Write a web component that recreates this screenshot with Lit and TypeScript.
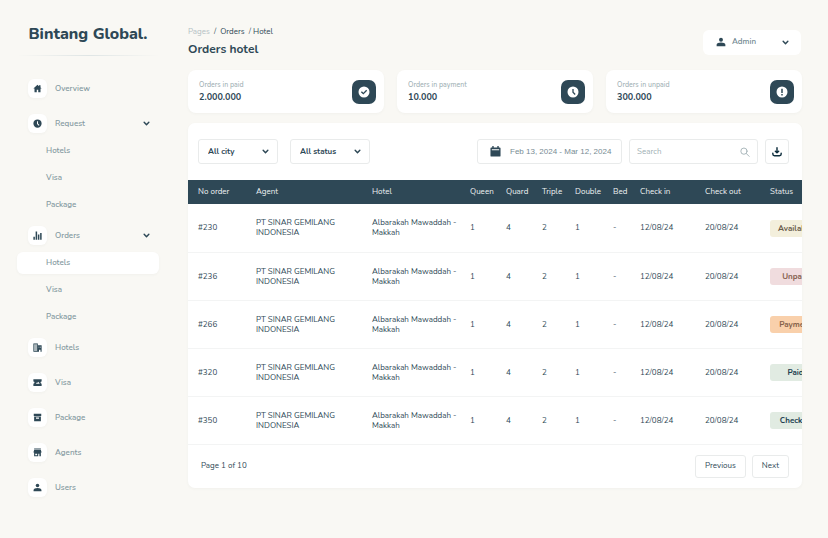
import { LitElement, html, css, svg, nothing } from "lit";
import { customElement, property } from "lit/decorators.js";
import { classMap } from "lit/directives/class-map.js";

const glyphs: Record<string, unknown> = {
  home: svg`<path d="M12 2 1 12h3v10h6v-7h4v7h6V12h3l-3-3V3h-4v3z"/>`,
  clock: svg`<path fill-rule="evenodd" d="M12 1a11 11 0 1 0 0 22 11 11 0 0 0 0-22zm-1.300 5h2.600v6l4 4.200-1.900 1.800-4.700-5z"/>`,
  bars: svg`<path d="M1 15h4v8H1zM7 1h4v22H7zM13 9h4v14h-4zM19 5h4v18h-4z"/>`,
  building: svg`<path opacity=".4" d="M3 2h8v20H3z"/><path fill-rule="evenodd" d="M1 1h12v22H1zm2 2v18h8V3z"/><path fill-rule="evenodd" d="M12 6h11v17h-3v-5h-4v5h-4zm3 4v2h2v-2zm4 0v2h2v-2z"/>`,
  ticket: svg`<path fill-rule="evenodd" d="M1 3h22v6a3 3 0 0 0 0 6v6H1v-6a3 3 0 0 0 0-6zm7 12h10l-4-5-3 3-1-1z"/>`,
  box: svg`<path fill-rule="evenodd" d="M2 2h20v6H2zM3 9h18v13H3zm5 3v3h8v-3z"/>`,
  store: svg`<path fill-rule="evenodd" d="M3 1h18v3H3zM3 5h18l2 7H1zM3 12h18v10h-4v-7h-3v7H3zm3 3v4h5v-4z"/>`,
  user: svg`<circle cx="12" cy="6.500" r="4.700"/><path d="M1.500 22v-3.500c0-3.500 5-5.500 10.500-5.500s10.500 2 10.500 5.500V22z"/>`,
  check: svg`<path fill-rule="evenodd" d="M12 1a11 11 0 1 0 0 22 11 11 0 0 0 0-22zM5.800 12.300l1.900-1.900 3 3 5.700-5.700 1.900 1.900-7.600 7.600z"/>`,
  alert: svg`<path fill-rule="evenodd" d="M12 1a11 11 0 1 0 0 22 11 11 0 0 0 0-22zm-1.500 4.500h3v8.500h-3zm0 10.500h3v3h-3z"/>`,
  calendar: svg`<path fill-rule="evenodd" d="M5 0h3v3h8V0h3v3h2a2 2 0 0 1 2 2v16a2 2 0 0 1-2 2H3a2 2 0 0 1-2-2V5a2 2 0 0 1 2-2h2zM4 7v2.500h16V7z"/>`,
  chevron: svg`<path class="line" stroke-width="5" d="m4 8 8 8 8-8"/>`,
  search: svg`<path class="line" stroke-width="2" d="M17 10a7.500 7.500 0 1 1-15 0 7.500 7.500 0 0 1 15 0zM15 15.500l7 7"/>`,
  download: svg`<path class="line" stroke-width="3.500" d="M12 2v10M8 10l4 4 4-4M2 15v2q0 4 4 4h12q4 0 4-4v-2"/>`,
};

@customElement("app-icon")
class AppIcon extends LitElement {
  static styles = css`
    :host { display: inline-flex; flex: none; width: 10px; height: 10px; }
    svg { width: 100%; height: 100%; fill: currentColor; }
    .line { fill: none; stroke: currentColor; stroke-linejoin: round; stroke-linecap: round; }
  `;
  @property() name = "";
  render() {
    return html`<svg viewBox="0 0 24 24" aria-hidden="true">${glyphs[this.name] ?? nothing}</svg>`;
  }
}

interface NavItem { label: string; icon: string; children?: string[]; current?: string }

const services = ["Hotels", "Visa", "Package"];
const nav: NavItem[] = [
  { label: "Overview", icon: "home" },
  { label: "Request", icon: "clock", children: services },
  { label: "Orders", icon: "bars", children: services, current: "Hotels" },
  { label: "Hotels", icon: "building" },
  { label: "Visa", icon: "ticket" },
  { label: "Package", icon: "box" },
  { label: "Agents", icon: "store" },
  { label: "Users", icon: "user" },
];

const stats = [
  { label: "Orders in paid", value: "2.000.000", icon: "check" },
  { label: "Orders in payment", value: "10.000", icon: "clock" },
  { label: "Orders in unpaid", value: "300.000", icon: "alert" },
];

const columns = [
  ["No order", "c-no"], ["Agent", "c-agent"], ["Hotel", "c-hotel"], ["Queen", "c-room"],
  ["Quard", "c-room"], ["Triple", "c-triple"], ["Double", "c-double"], ["Bed", "c-bed"],
  ["Check in", "c-date"], ["Check out", "c-date"], ["Status", "c-status"],
];

const orders = [
  ["#230", "Available", "available"],
  ["#236", "Unpaid", "unpaid"],
  ["#266", "Payment", "payment"],
  ["#320", "Paid", "paid"],
  ["#350", "Check in", "paid"],
];

@customElement("app-root")
class AppRoot extends LitElement {
  static styles = css`
    :host {
      --ink: #2e4856;
      --muted: #869ba2;
      --line: #e9ebeb;
      display: grid;
      grid-template-columns: 176px minmax(0, 1fr);
      min-height: 100vh;
      background: #f9f8f4;
      color: var(--ink);
      font: 8px/10px "Nunito", "Lato", sans-serif;
    }
    * { box-sizing: border-box; }
    button, select, input { font: inherit; color: inherit; margin: 0; }
    button { cursor: pointer; border: 0; background: none; padding: 0; }
    a { color: inherit; text-decoration: none; }
    ul { list-style: none; margin: 0; padding: 0; }

    .sidebar { padding: 24px 17px; }
    .brand { font-size: 16px; line-height: 21px; font-weight: 800; text-align: center; white-space: nowrap; }
    .rule { height: 1px; margin: 10px 0 17px; background: linear-gradient(90deg, transparent, #dfe5e5, transparent); }
    .menu { display: flex; flex-direction: column; gap: 4px; color: var(--muted); font-weight: 600; }
    .entry { display: flex; align-items: center; gap: 8px; width: 100%; height: 31px; padding: 0 9px 0 11px; text-align: left; }
    .entry .label { flex: 1; }
    .tile { display: grid; place-items: center; width: 19px; height: 19px; border-radius: 6px; background: #fff; color: var(--ink); box-shadow: 0 1px 3px #2e48560a; }
    .tile app-icon { width: 9px; height: 9px; }
    .chevron { width: 7px; height: 7px; color: var(--ink); }
    .submenu { display: flex; flex-direction: column; gap: 5px; padding-top: 1px; }
    .sub { display: flex; align-items: center; height: 22px; padding-left: 29px; border-radius: 6px; }
    .sub.current { background: #fff; box-shadow: 0 1px 3px #2e48560a; }

    .main { padding: 26px 26px 24px 12px; }
    .top { display: flex; justify-content: space-between; align-items: center; }
    .crumbs { display: flex; gap: 4px; line-height: 12px; }
    .crumbs .root { color: #b4c1c4; }
    h1 { margin: 2px 0 0; font-size: 12px; line-height: 18px; font-weight: 700; }
    .account { display: flex; align-items: center; gap: 6px; width: 98px; height: 25px; padding: 0 12px 0 13px; margin-right: 1px; border-radius: 6px; background: #fff; color: #70878f; font-weight: 600; text-align: left; }
    .account .label { flex: 1; }
    .account app-icon { color: var(--ink); }

    .stats { display: grid; grid-template-columns: repeat(3, minmax(0, 1fr)); gap: 13px; margin: 12px 0 10px; }
    .stat { display: flex; justify-content: space-between; align-items: center; height: 43px; padding: 0 8px 0 11px; border-radius: 8px; background: #fff; box-shadow: 0 1px 3px #2e48560a; }
    .stat dl { margin: 0; }
    .stat dt { font-size: 7px; line-height: 10px; font-weight: 500; color: #a0b0b4; }
    .stat dd { margin: 0; font-size: 9px; line-height: 14px; font-weight: 700; }
    .badge { display: grid; place-items: center; width: 24px; height: 24px; border-radius: 7px; background: var(--ink); color: #fff; }
    .badge app-icon { width: 12px; height: 12px; }

    .panel { border-radius: 7px; background: #fff; overflow: hidden; box-shadow: 0 1px 3px #2e48560a; }
    .tools { display: flex; align-items: center; padding: 16px 13px 16px 10px; gap: 7px; }
    .field { display: flex; align-items: center; height: 25px; border: 1px solid var(--line); border-radius: 3px; background: #fff; }
    .pick { display: grid; grid-template-columns: minmax(0, 1fr) 15px; width: 80px; margin-right: 5px; font-weight: 700; }
    .pick select { grid-area: 1 / 1 / 2 / 3; height: 23px; padding: 0 9px; border: 0; background: none; appearance: none; }
    .pick app-icon { grid-area: 1 / 2; pointer-events: none; }
    .range { gap: 9px; width: 145px; padding: 0 12px; margin-left: auto; font-family: "Liberation Sans", Arial, sans-serif; color: #788c94; white-space: nowrap; }
    .range app-icon { width: 11px; height: 11px; color: var(--ink); }
    .search { width: 129px; padding: 0 7px; color: #9aabb0; }
    .search input { flex: 1; min-width: 0; border: 0; padding: 0; outline: 0; background: none; }
    .search input::placeholder { color: #a0afb4; opacity: 1; }
    .save { justify-content: center; width: 24px; color: #10303f; }

    .scroll { overflow-x: auto; scrollbar-width: none; }
    table { width: 100%; min-width: 660px; table-layout: fixed; border-collapse: collapse; }
    th, td { padding: 0; text-align: left; vertical-align: middle; font-weight: 400; }
    td { padding-top: 1px; }
    th:first-child, td:first-child { padding-left: 10px; }
    th { height: 24px; background: var(--ink); color: #eef2f3; }
    td { height: 48px; border-bottom: 1px solid #f3f4f4; }
    .c-no { width: 68px; }
    .c-agent { width: 116px; }
    .c-hotel { width: 98px; }
    .c-room { width: 36px; }
    .c-triple { width: 33px; }
    .c-double { width: 38px; }
    .c-bed { width: 27px; }
    .c-date { width: 65px; }
    .two { display: block; width: 88px; }
    .status { display: block; width: 51px; line-height: 17px; border-radius: 3px; text-align: center; font-weight: 700; }
    .available { background: #f3efdc; color: #6b5d4c; }
    .unpaid { background: #f0dcde; color: #85604f; }
    .payment { background: #f9d0ab; color: #85614a; }
    .paid { background: #e1ebe2; color: #223f50; }

    .foot { display: flex; align-items: center; gap: 6px; height: 43px; padding: 0 13px; }
    .foot .label { flex: 1; }
    .foot .field { height: 23px; padding: 0 9px; }
  `;

  private entry(item: NavItem) {
    const body = html`<span class="tile"><app-icon name=${item.icon}></app-icon></span><span class="label">${item.label}</span>`;
    if (!item.children) return html`<li><a class="entry" href="#">${body}</a></li>`;
    return html`<li>
      <button class="entry" aria-expanded="true">${body}<app-icon class="chevron" name="chevron"></app-icon></button>
      <ul class="submenu">
        ${item.children.map((c) => html`<li><a href="#" class=${classMap({ sub: true, current: c === item.current })}>${c}</a></li>`)}
      </ul>
    </li>`;
  }

  private pick(label: string, name: string) {
    return html`<div class="field pick">
      <select aria-label=${name}><option>${label}</option></select>
      <app-icon class="chevron" name="chevron"></app-icon>
    </div>`;
  }

  render() {
    return html`
      <aside class="sidebar">
        <div class="brand">Bintang Global.</div>
        <div class="rule"></div>
        <nav aria-label="Main"><ul class="menu">${nav.map((n) => this.entry(n))}</ul></nav>
      </aside>
      <main class="main">
        <header class="top">
          <div>
            <nav class="crumbs" aria-label="Breadcrumb">
              <a class="root" href="#">Pages</a><span>/</span><a href="#">Orders</a><span>/ Hotel</span>
            </nav>
            <h1>Orders hotel</h1>
          </div>
          <button class="account">
            <app-icon name="user"></app-icon><span class="label">Admin</span><app-icon class="chevron" name="chevron"></app-icon>
          </button>
        </header>
        <section class="stats">
          ${stats.map((s) => html`<div class="stat">
            <dl><dt>${s.label}</dt><dd>${s.value}</dd></dl>
            <span class="badge"><app-icon name=${s.icon}></app-icon></span>
          </div>`)}
        </section>
        <section class="panel">
          <div class="tools">
            ${this.pick("All city", "City")}${this.pick("All status", "Status")}
            <button class="field range"><app-icon name="calendar"></app-icon>Feb 13, 2024 - Mar 12, 2024</button>
            <label class="field search"><input type="search" placeholder="Search" aria-label="Search" /><app-icon name="search"></app-icon></label>
            <button class="field save" aria-label="Download"><app-icon name="download"></app-icon></button>
          </div>
          <div class="scroll">
            <table>
              <thead><tr>${columns.map(([t, c]) => html`<th scope="col" class=${c}>${t}</th>`)}</tr></thead>
              <tbody>
                ${orders.map(([no, status, tone]) => html`<tr>
                  <td>${no}</td>
                  <td><span class="two">PT SINAR GEMILANG INDONESIA</span></td>
                  <td><span class="two">Albarakah Mawaddah - Makkah</span></td>
                  <td>1</td><td>4</td><td>2</td><td>1</td><td>-</td>
                  <td>12/08/24</td><td>20/08/24</td>
                  <td><span class="status ${tone}">${status}</span></td>
                </tr>`)}
              </tbody>
            </table>
          </div>
          <footer class="foot">
            <span class="label">Page 1 of 10</span>
            <button class="field">Previous</button>
            <button class="field">Next</button>
          </footer>
        </section>
      </main>
    `;
  }
}
